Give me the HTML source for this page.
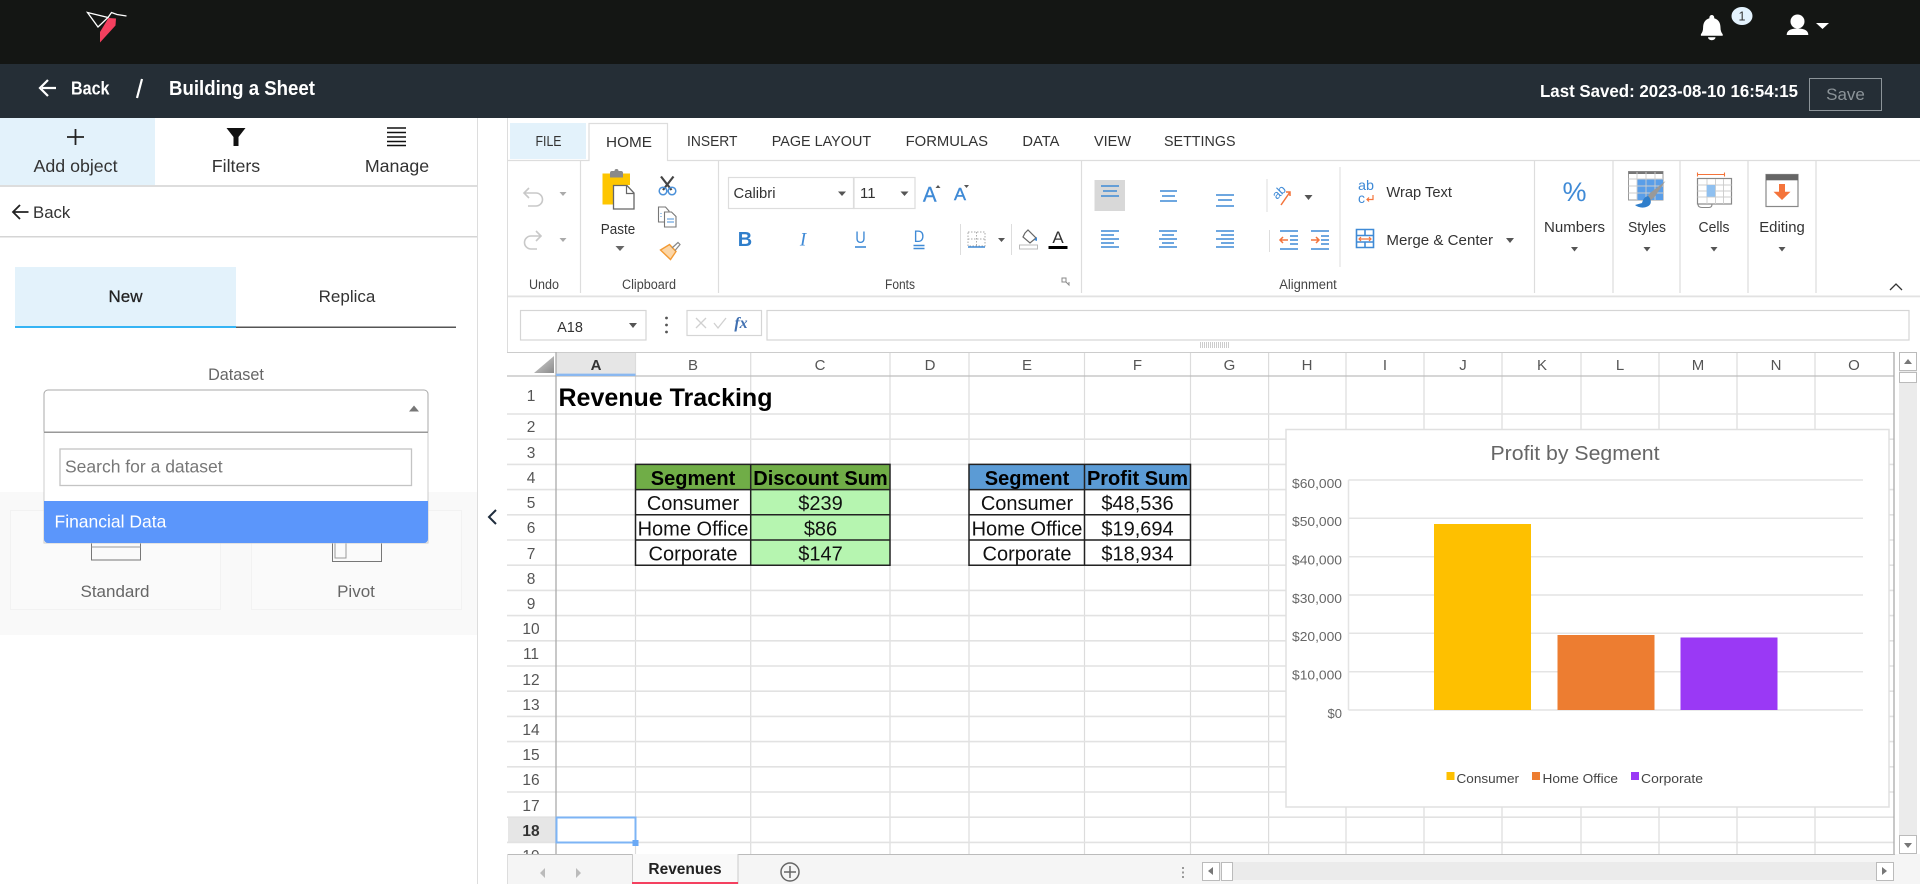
<!DOCTYPE html>
<html lang="en">
<head>
<meta charset="utf-8">
<title>Building a Sheet</title>
<style>
html,body{margin:0;padding:0;width:1920px;height:884px;overflow:hidden;background:#fff;font-family:"Liberation Sans",sans-serif}
svg{position:absolute;left:0;top:0}
text{font-family:"Liberation Sans",sans-serif}
.rb{font-size:14.5px;fill:#333}
.tab{font-size:14.8px;fill:#333}
.lbl{font-size:13.5px;fill:#444;text-anchor:middle}
.rn{font-size:15.5px;fill:#555;text-anchor:middle}
.cl{font-size:15px;fill:#555;text-anchor:middle}
.th{font-size:20px;font-weight:bold;fill:#000;text-anchor:middle}
.td{font-size:20px;fill:#111;text-anchor:middle}
.ax{font-size:13px;fill:#666;text-anchor:end}
.lg{font-size:12.5px;fill:#444}
.b{stroke:#3f8ad6;stroke-width:1.6;fill:none}
</style>
</head>
<body>
<svg width="1920" height="884" viewBox="0 0 1920 884">
<defs>
<linearGradient id="cor" x1="0" y1="0" x2="1" y2="1"><stop offset="0" stop-color="#d8d8d8"/><stop offset="1" stop-color="#8a8a8a"/></linearGradient>
<clipPath id="gridclip"><rect x="507" y="352" width="1388" height="502"/></clipPath>
</defs>

<!-- top bars -->
<rect x="0" y="0" width="1920" height="64" fill="#141614"/>
<rect x="0" y="64" width="1920" height="54" fill="#252e36"/>
<!-- logo -->
<path d="M87.500 12.500L108 17.500L98 27Z" fill="none" stroke="#fff" stroke-width="1.300"/>
<path d="M108 17.500L111.500 12.500L117 14.500L126.500 16" fill="none" stroke="#fff" stroke-width="1.300"/>
<path d="M108.500 18L116 18.500L115.500 25.500L100 42.500L100 32Z" fill="#f4405f"/>
<!-- bell / user -->
<path d="M1711.800 15a2.400 2.400 0 0 1 2.400 2.400v.8c4.500 1.200 6.300 5 6.300 9.300 0 3 .8 5 2.200 6.700v1.500h-21.800v-1.500c1.400-1.700 2.200-3.700 2.200-6.700 0-4.300 1.800-8.100 6.300-9.300v-.8a2.400 2.400 0 0 1 2.400-2.400z M1708 37.300h7.500a3.750 3 0 0 1-7.500 0z" fill="#fff"/>
<ellipse cx="1742" cy="16" rx="10.500" ry="9" fill="#e3f2fd"/>
<text x="1742" y="20.500" font-size="12.500" fill="#333" text-anchor="middle">1</text>
<circle cx="1797.500" cy="21.500" r="7" fill="#fff"/>
<path d="M1786.700 35c0-5 5-6.500 10.800-6.500s10.800 1.500 10.800 6.500z" fill="#fff"/>
<path d="M1816 23h13l-6.500 6z" fill="#fff"/>
<!-- sub header -->
<path d="M56 88H42M48 80l-8 8 8 8" fill="none" stroke="#fff" stroke-width="2.200"/>
<text x="71" y="94.500" font-size="18" font-weight="bold" fill="#fff" textLength="38.500" lengthAdjust="spacingAndGlyphs">Back</text>
<path d="M142 79L137 98" stroke="#fff" stroke-width="2.200"/>
<text x="169" y="95" font-size="20" font-weight="bold" fill="#fff" textLength="146" lengthAdjust="spacingAndGlyphs">Building a Sheet</text>
<text x="1540" y="97" font-size="17.500" font-weight="bold" fill="#fff" textLength="258" lengthAdjust="spacingAndGlyphs">Last Saved: 2023-08-10 16:54:15</text>
<rect x="1809.500" y="78.500" width="72" height="32" fill="none" stroke="#8c9499"/>
<text x="1845.500" y="100" font-size="17" fill="#8c9499" text-anchor="middle">Save</text>

<!-- left panel -->
<rect x="0" y="118" width="155" height="67" fill="#e3f2fb"/>
<path d="M75.500 129v16M67 137h17" stroke="#222" stroke-width="1.800"/>
<path d="M226.500 128h19l-7 9v9h-5v-9z" fill="#111"/>
<path d="M387 128h19M387 132.500h19M387 137h19M387 141.500h19M387 145.500h19" stroke="#111" stroke-width="1.500"/>
<text x="75.500" y="172" font-size="17.800" fill="#333" text-anchor="middle">Add object</text>
<text x="236" y="172" font-size="17.800" fill="#333" text-anchor="middle">Filters</text>
<text x="397" y="172" font-size="17.800" fill="#333" text-anchor="middle">Manage</text>
<rect x="0" y="185" width="477" height="2" fill="#ddd"/>
<path d="M28.500 212H13M20 205l-7 7 7 7" fill="none" stroke="#222" stroke-width="1.800"/>
<text x="33" y="218" font-size="16.800" fill="#333">Back</text>
<rect x="0" y="236" width="477" height="1.500" fill="#d5d5d5"/>
<rect x="15" y="267" width="221" height="60" fill="#e3f2fb"/>
<text x="125.500" y="302" font-size="17" fill="#222" text-anchor="middle" stroke="#222" stroke-width=".25">New</text>
<text x="347" y="302" font-size="17" fill="#333" text-anchor="middle">Replica</text>
<rect x="15" y="326" width="221" height="2" fill="#35b4f4"/>
<rect x="236" y="326.500" width="220" height="1.500" fill="#555"/>
<text x="236" y="380" font-size="16.200" fill="#666" text-anchor="middle">Dataset</text>

<rect x="0" y="492" width="477" height="143" fill="#f9f9f9"/>
<rect x="10.500" y="510.500" width="210" height="99" fill="#fafafa" stroke="#f2f2f2"/>
<rect x="251.500" y="510.500" width="210" height="99" fill="#fafafa" stroke="#f2f2f2"/>
<rect x="91.500" y="530" width="49" height="30" fill="none" stroke="#777"/>
<path d="M91.500 547h49" stroke="#999"/>
<rect x="332.500" y="530" width="49" height="31.500" fill="none" stroke="#777"/>
<rect x="335" y="530" width="11" height="28" fill="none" stroke="#999"/>
<text x="115" y="597" font-size="17" fill="#666" text-anchor="middle">Standard</text>
<text x="356" y="597" font-size="17" fill="#666" text-anchor="middle">Pivot</text>

<!-- dropdown -->
<path d="M44 432V394a4 4 0 0 1 4-4H424a4 4 0 0 1 4 4V432Z" fill="#fff" stroke="#aaa"/>
<path d="M409 411.500h10l-5-6z" fill="#777"/>
<rect x="44" y="432" width="384" height="111" fill="#fff" stroke="#ccc"/>
<rect x="44" y="431.500" width="384" height="1.500" fill="#999"/>
<rect x="60" y="449" width="351.500" height="36.500" fill="#fff" stroke="#c4c4c4" stroke-width="1.300"/>
<text x="65" y="472.500" font-size="17.500" fill="#777">Search for a dataset</text>
<path d="M44 501H428V539a4 4 0 0 1-4 4H48a4 4 0 0 1-4-4Z" fill="#5b96fb"/>
<text x="54.500" y="527.500" font-size="17.500" fill="#fff">Financial Data</text>
<path d="M496 510l-7 7 7 7" fill="none" stroke="#1f2d3d" stroke-width="2"/>

<rect x="477" y="118" width="1" height="766" fill="#ddd"/>
<rect x="507" y="118" width="1" height="766" fill="#ddd"/>

<!-- ribbon tabs -->
<rect x="510" y="123" width="76" height="36" fill="#e3f2fb"/>
<path d="M508 160.500H589V123.500H667.500V160.500H1920" fill="none" stroke="#ddd" stroke-width="1.200"/>
<text class="tab" x="548.500" y="146" text-anchor="middle" textLength="26" lengthAdjust="spacingAndGlyphs">FILE</text>
<text class="tab" x="629" y="147" text-anchor="middle" textLength="46" lengthAdjust="spacingAndGlyphs">HOME</text>
<text class="tab" x="687" y="146" textLength="50.500" lengthAdjust="spacingAndGlyphs">INSERT</text>
<text class="tab" x="771.700" y="146" textLength="99.500" lengthAdjust="spacingAndGlyphs">PAGE LAYOUT</text>
<text class="tab" x="905.600" y="146" textLength="82.500" lengthAdjust="spacingAndGlyphs">FORMULAS</text>
<text class="tab" x="1022.400" y="146" textLength="37" lengthAdjust="spacingAndGlyphs">DATA</text>
<text class="tab" x="1094" y="146" textLength="37" lengthAdjust="spacingAndGlyphs">VIEW</text>
<text class="tab" x="1164" y="146" textLength="71.500" lengthAdjust="spacingAndGlyphs">SETTINGS</text>

<!-- ribbon separators -->
<path d="M580.500 161V293M718.500 161V293M1081.500 161V293M1534.500 161V293M1613 161V293M1680 161V293M1748 161V293M1816 161V293" stroke="#ddd" stroke-width="1.200"/>
<rect x="508" y="295.500" width="1412" height="1.800" fill="#e2e2e2"/>
<text class="lbl" x="544" y="289" textLength="30" lengthAdjust="spacingAndGlyphs">Undo</text>
<text class="lbl" x="649" y="289" textLength="54" lengthAdjust="spacingAndGlyphs">Clipboard</text>
<text class="lbl" x="900" y="289" textLength="30" lengthAdjust="spacingAndGlyphs">Fonts</text>
<text class="lbl" x="1308" y="289" textLength="57.600" lengthAdjust="spacingAndGlyphs">Alignment</text>

<!-- undo/redo -->
<path d="M524 193h12a6.500 6.500 0 0 1 0 13h-8M529 188l-5 5 5 5" fill="none" stroke="#c8c8c8" stroke-width="1.600"/>
<path d="M541 236h-10a6.500 6.500 0 0 0 0 13h6M536 231l5 5-5 5" fill="none" stroke="#c8c8c8" stroke-width="1.600"/>
<path d="M559.500 192h7l-3.500 4zM559.500 238h7l-3.500 4z" fill="#aaa"/>

<!-- clipboard -->
<path d="M602.500 173.500H630V185H613.500V204.500H602.500Z" fill="#fec600"/>
<path d="M610 177.500v-4.500a2 2 0 0 1 2-2h2.500a2 2 0 0 1 4 0h2.500a2 2 0 0 1 2 2v4.500z" fill="#8a8a8a"/>
<path d="M613.500 185.500h13.500l7 7.500v16h-20.500z" fill="#fff" stroke="#666" stroke-width="1.300"/>
<path d="M626.500 185.500v8h7.500" fill="none" stroke="#666" stroke-width="1.200"/>
<text class="rb" x="618" y="234" text-anchor="middle" textLength="34.400" lengthAdjust="spacingAndGlyphs">Paste</text>
<path d="M615.500 246h9l-4.500 5z" fill="#666"/>
<path d="M661 176.500L671.500 190M673.500 176.500L663 190" stroke="#444" stroke-width="2.200"/>
<circle cx="663" cy="191" r="3.800" fill="none" stroke="#4a90d9" stroke-width="1.500"/>
<circle cx="672" cy="191" r="3.800" fill="none" stroke="#4a90d9" stroke-width="1.500"/>
<path d="M658.500 207h7l3.500 4v11h-10.500z" fill="#fff" stroke="#777" stroke-width="1.100"/>
<path d="M664.500 212h7l4.500 4.500v10.500h-11.500z" fill="#fff" stroke="#777" stroke-width="1.100"/>
<path d="M667 219h7M667 222h7M661 213v1M661 216v1" stroke="#4a90d9"/>
<path d="M660.500 250l9-5.500 6.500 7-5.500 8z" fill="#fcd6a6" stroke="#f39a33" stroke-width="1.400"/>
<path d="M672 248l6-5.500 2 2-5 6" fill="none" stroke="#888" stroke-width="1.200"/>

<!-- fonts -->
<rect x="728.500" y="177.500" width="125" height="31" fill="#fff" stroke="#ddd" stroke-width="1.200"/>
<rect x="854" y="177.500" width="61" height="31" fill="#fff" stroke="#ddd" stroke-width="1.200"/>
<text x="733.500" y="198" font-size="15" fill="#333" textLength="42" lengthAdjust="spacingAndGlyphs">Calibri</text>
<text x="860" y="198" font-size="15" fill="#333">11</text>
<path d="M838 191.500h8l-4 4.500zM900.500 191.500h8l-4 4.500z" fill="#555"/>
<text x="923" y="201.700" font-size="21.500" fill="#3f8ad6" textLength="13.500" lengthAdjust="spacingAndGlyphs" stroke="#3f8ad6" stroke-width=".4">A</text>
<path d="M935.500 188l2.500-3 2.500 3z" fill="#555"/>
<text x="954" y="200" font-size="17.500" fill="#3f8ad6" textLength="12" lengthAdjust="spacingAndGlyphs" stroke="#3f8ad6" stroke-width=".4">A</text>
<path d="M964 185h5l-2.500 3z" fill="#555"/>
<text x="745" y="246" font-size="20" font-weight="bold" fill="#2f7ecb" text-anchor="middle">B</text>
<text x="803" y="245.500" font-size="19" font-style="italic" fill="#3f8ad6" text-anchor="middle" style="font-family:'Liberation Serif',serif">I</text>
<text x="860.500" y="243" font-size="16.500" fill="#3f8ad6" text-anchor="middle" textLength="10.500" lengthAdjust="spacingAndGlyphs">U</text>
<path d="M855 247h11" class="b"/>
<text x="919" y="242" font-size="16.500" fill="#3f8ad6" text-anchor="middle" textLength="10.500" lengthAdjust="spacingAndGlyphs">D</text>
<path d="M913.500 245.500h11M913.500 248.500h11" class="b"/>
<path d="M960.500 224v31M1011.500 224v31" stroke="#ddd"/>
<path d="M968 232h17v14h-17zM976.500 232v14M968 239h17" fill="none" stroke="#aaa" stroke-dasharray="1.500 1.500"/>
<path d="M968 247h17" class="b"/>
<path d="M998 238h7l-3.500 4z" fill="#555"/>
<path d="M1025 233l3-3 8 8-6 5-7-6z" fill="none" stroke="#666" stroke-width="1.200"/>
<path d="M1034 240l3-3v4z" fill="#3f8ad6"/>
<rect x="1019.500" y="245" width="18" height="4" fill="#fff" stroke="#bbb"/>
<text x="1058" y="243" font-size="17" fill="#333" text-anchor="middle">A</text>
<rect x="1048.500" y="246" width="19" height="3" fill="#000"/>
<path d="M1062 278h4v4h-4zM1066 282l3 3v-3" fill="none" stroke="#888"/>

<!-- alignment -->
<rect x="1094.500" y="180" width="30.500" height="31" fill="#d8d8d8"/>
<path class="b" d="M1101 186h18M1103 191h14M1101 196h18"/>
<path class="b" d="M1160 191h17M1162 196h13M1160 201h17"/>
<path class="b" d="M1216 195h18M1218 200h14M1216 206h18"/>
<path class="b" d="M1101 231h18M1101 235h13M1101 239h18M1101 243h13M1101 247h18"/>
<path class="b" d="M1159 231h18M1162 235h12M1159 239h18M1162 243h12M1159 247h18"/>
<path class="b" d="M1216 231h18M1221 235h13M1216 239h18M1221 243h13M1216 247h18"/>
<path d="M1267 179v33M1269.500 230v22M1340 167v100" stroke="#ddd"/>
<text x="1277" y="200" font-size="12.500" fill="#3f8ad6" transform="rotate(-45 1277 200)">ab</text>
<path d="M1281 205l9-13M1286 192h4v4" fill="none" stroke="#f4743b" stroke-width="1.500"/>
<path d="M1304.500 195h8l-4 5z" fill="#555"/>
<path class="b" d="M1280 231h18M1290 236h8M1290 240h8M1290 244h8M1280 249h18"/>
<path d="M1288 240h-8M1283 237l-3 3 3 3" fill="none" stroke="#f4743b" stroke-width="1.500"/>
<path class="b" d="M1311 231h18M1321 236h8M1321 240h8M1321 244h8M1311 249h18"/>
<path d="M1311 240h8M1316 237l3 3-3 3" fill="none" stroke="#f4743b" stroke-width="1.500"/>
<text x="1358" y="190" font-size="14" fill="#3f8ad6" textLength="16" lengthAdjust="spacingAndGlyphs">ab</text>
<text x="1358" y="203" font-size="14" fill="#3f8ad6">c</text>
<path d="M1373 195v4.500h-6M1369 197.500l-2 2 2 2" fill="none" stroke="#f4743b" stroke-width="1.200"/>
<text class="rb" x="1386.400" y="197" textLength="65.600" lengthAdjust="spacingAndGlyphs">Wrap Text</text>
<path d="M1356.500 229.500h17v18h-17zM1356.500 235.500h17M1356.500 242h17M1365 229.500v6M1365 242v6" class="b"/>
<path d="M1359 239h12M1361 237l-2 2 2 2M1369 237l2 2-2 2" fill="none" stroke="#f4743b" stroke-width="1.200"/>
<text class="rb" x="1386.400" y="245" textLength="106.600" lengthAdjust="spacingAndGlyphs">Merge &amp; Center</text>
<path d="M1506 238h8l-4 5z" fill="#555"/>

<!-- numbers / styles / cells / editing -->
<text x="1574.500" y="201" font-size="27" fill="#3f8ad6" text-anchor="middle">%</text>
<text class="rb" x="1574.500" y="232" text-anchor="middle" textLength="61" lengthAdjust="spacingAndGlyphs">Numbers</text>
<path d="M1571 247h7l-3.500 4.500z" fill="#555"/>

<rect x="1628.500" y="171.500" width="34.500" height="28.500" fill="#fff" stroke="#999"/>
<rect x="1628.500" y="171.500" width="34.500" height="2.500" fill="#777"/>
<rect x="1637" y="179" width="26" height="21" fill="#5a9ee8"/>
<path d="M1628.500 179h34.500M1628.500 186h34.500M1628.500 193h34.500M1637 172v28M1646 172v28M1655 172v28" stroke="#ccc" stroke-width=".9"/>
<path d="M1665.500 181L1650 193l-3.500 5 4 2.500 4-3.500z" fill="#999"/>
<path d="M1648 196c-4 1-5 4-6 7l-7 2c4 3.500 12 3.500 15-.5 2-3 0-7-2-8.500z" fill="#2f7ecb"/>
<text class="rb" x="1647" y="232" text-anchor="middle" textLength="38" lengthAdjust="spacingAndGlyphs">Styles</text>
<path d="M1643.500 247h7l-3.500 4.500z" fill="#555"/>

<path d="M1698 174.500h26M1697.500 172.500v4M1724.500 172.500v4" stroke="#f4743b" fill="none" stroke-width="1.100"/>
<rect x="1697.500" y="178.500" width="34" height="25.500" fill="#fff" stroke="#888" stroke-width="1.200"/>
<path d="M1707 179v25M1715.500 179v25M1723.500 179v25M1697.500 185h34M1697.500 191h34M1697.500 197h34" stroke="#ccc" stroke-width=".9"/>
<rect x="1706.700" y="185" width="8.500" height="11.700" fill="#8fc0f0"/>
<path d="M1698 204c0 3 2 3.500 4 3.500h7c2 0 3-1 3-3.500" fill="none" stroke="#888" stroke-width="1.100"/>
<text class="rb" x="1714" y="232" text-anchor="middle" textLength="31" lengthAdjust="spacingAndGlyphs">Cells</text>
<path d="M1710.500 247h7l-3.500 4.500z" fill="#555"/>

<rect x="1766" y="174.500" width="32" height="32" fill="#fff" stroke="#888" stroke-width="1.200"/>
<rect x="1766" y="174.500" width="32" height="5.800" fill="#666"/>
<path d="M1779 184h6v7.700h5.500l-8.500 8.300-8.500-8.300h5.500z" fill="#f4743b"/>
<text class="rb" x="1782" y="232" text-anchor="middle" textLength="45.500" lengthAdjust="spacingAndGlyphs">Editing</text>
<path d="M1778.500 247h7l-3.500 4.500z" fill="#555"/>
<path d="M1890 290l6-6 6 6" fill="none" stroke="#333" stroke-width="1.300"/>

<!-- formula bar -->
<rect x="520.500" y="310.500" width="125.500" height="29.500" fill="#fff" stroke="#d5d5d5" stroke-width="1.200"/>
<text x="570" y="332" font-size="14.500" fill="#333" text-anchor="middle">A18</text>
<path d="M629 323h8l-4 5z" fill="#555"/>
<circle cx="666.500" cy="318" r="1.400" fill="#555"/><circle cx="666.500" cy="325" r="1.400" fill="#555"/><circle cx="666.500" cy="332" r="1.400" fill="#555"/>
<rect x="687" y="310.500" width="74.500" height="25" fill="#fff" stroke="#d5d5d5" stroke-width="1.200"/>
<path d="M696 318l10 10M706 318l-10 10M714 323l4 5 8-10" fill="none" stroke="#d0d0d0" stroke-width="1.300"/>
<text x="741" y="328" font-size="16" font-style="italic" font-weight="bold" fill="#3f6fb0" text-anchor="middle" style="font-family:'Liberation Serif',serif">fx</text>
<rect x="767" y="310.500" width="1142" height="29.500" fill="#fff" stroke="#d5d5d5" stroke-width="1.200"/>
<path d="M1200 343h30M1200 345h30M1200 347h30" stroke="#999" stroke-dasharray="1 1"/>

<!-- grid -->
<g clip-path="url(#gridclip)">
<rect x="507" y="352" width="1388" height="502" fill="#fff"/>
<rect x="556" y="352" width="80" height="24" fill="#e6e6e6"/>
<rect x="508" y="817" width="48" height="25.400" fill="#e6e6e6"/>
<path d="M554 356v17h-20z" fill="url(#cor)"/>
<path stroke="#dcdcdc" stroke-width="1.200" fill="none" d="M635.500 352V854M750.700 352V854M890 352V854M969 352V854M1084.500 352V854M1190.500 352V854M1268.600 352V854M1346 352V854M1424 352V854M1502 352V854M1581 352V854M1659 352V854M1737 352V854M1815 352V854"/>
<path stroke="#e2e2e2" stroke-width="1.600" fill="none" d="M507 414H1894M507 439.200H1894M507 464.400H1894M507 489.600H1894M507 514.800H1894M507 540H1894M507 565.200H1894M507 590.400H1894M507 615.600H1894M507 640.800H1894M507 666H1894M507 691.200H1894M507 716.400H1894M507 741.600H1894M507 766.800H1894M507 792H1894M507 817.200H1894M507 842.400H1894"/>
<path d="M507 352.500H1894" stroke="#ccc"/>
<path d="M507 376H1894" stroke="#bdbdbd" stroke-width="1.300"/>
<path d="M556 352V854" stroke="#aaa" stroke-width="1.300"/>
<path d="M556 374.800H635.500" stroke="#8ab8f0" stroke-width="2.400"/>
<g>
<text class="cl" x="596" y="370" font-weight="bold" style="fill:#333">A</text>
<text class="cl" x="693" y="370">B</text><text class="cl" x="820" y="370">C</text><text class="cl" x="930" y="370">D</text><text class="cl" x="1027" y="370">E</text><text class="cl" x="1137.500" y="370">F</text><text class="cl" x="1229.500" y="370">G</text><text class="cl" x="1307" y="370">H</text><text class="cl" x="1385" y="370">I</text><text class="cl" x="1463" y="370">J</text><text class="cl" x="1542" y="370">K</text><text class="cl" x="1620" y="370">L</text><text class="cl" x="1698" y="370">M</text><text class="cl" x="1776" y="370">N</text><text class="cl" x="1854" y="370">O</text>
</g>
<text class="rn" x="531" y="401">1</text><text class="rn" x="531" y="432">2</text><text class="rn" x="531" y="458">3</text><text class="rn" x="531" y="483">4</text><text class="rn" x="531" y="508">5</text><text class="rn" x="531" y="533">6</text><text class="rn" x="531" y="559">7</text><text class="rn" x="531" y="584">8</text><text class="rn" x="531" y="609">9</text><text class="rn" x="531" y="634">10</text><text class="rn" x="531" y="659">11</text><text class="rn" x="531" y="685">12</text><text class="rn" x="531" y="710">13</text><text class="rn" x="531" y="735">14</text><text class="rn" x="531" y="760">15</text><text class="rn" x="531" y="785">16</text><text class="rn" x="531" y="811">17</text><text class="rn" x="531" y="836" font-weight="bold" style="fill:#333">18</text><text class="rn" x="531" y="861">19</text>

<text x="558.500" y="406" font-size="25" font-weight="bold" fill="#000">Revenue Tracking</text>

<!-- table 1 -->
<rect x="635.500" y="464.400" width="254.500" height="25.200" fill="#70ad47"/>
<rect x="750.700" y="489.600" width="139.300" height="75.600" fill="#b6f5b0"/>
<path d="M635.500 464.400H890V565.200H635.500ZM750.700 464.400V565.200M635.500 489.600H890M635.500 514.800H890M635.500 540H890" fill="none" stroke="#222" stroke-width="1.500"/>
<text class="th" x="693" y="485">Segment</text><text class="th" x="820.500" y="485">Discount Sum</text>
<text class="td" x="693" y="510">Consumer</text><text class="td" x="820.500" y="510">$239</text>
<text class="td" x="693" y="535.500">Home Office</text><text class="td" x="820.500" y="535.500">$86</text>
<text class="td" x="693" y="560.500">Corporate</text><text class="td" x="820.500" y="560.500">$147</text>
<!-- table 2 -->
<rect x="969" y="464.400" width="221.500" height="25.200" fill="#5b9bd5"/>
<path d="M969 464.400H1190.500V565.200H969ZM1084.500 464.400V565.200M969 489.600H1190.500M969 514.800H1190.500M969 540H1190.500" fill="none" stroke="#222" stroke-width="1.500"/>
<text class="th" x="1027" y="485">Segment</text><text class="th" x="1137.500" y="485">Profit Sum</text>
<text class="td" x="1027" y="510">Consumer</text><text class="td" x="1137.500" y="510">$48,536</text>
<text class="td" x="1027" y="535.500">Home Office</text><text class="td" x="1137.500" y="535.500">$19,694</text>
<text class="td" x="1027" y="560.500">Corporate</text><text class="td" x="1137.500" y="560.500">$18,934</text>

<!-- selection -->
<rect x="556.500" y="817.500" width="79" height="25" fill="none" stroke="#7db4f5" stroke-width="2"/>
<rect x="632.500" y="840" width="6" height="6" fill="#6aa9f5"/>

<!-- chart -->
<rect x="1286" y="429.500" width="603" height="377.500" fill="#fff" stroke="#e0e0e0" stroke-width="1.500"/>
<text x="1575" y="460" font-size="20" fill="#666" text-anchor="middle" textLength="169" lengthAdjust="spacingAndGlyphs">Profit by Segment</text>
<path d="M1348.500 480H1863M1348.500 518.300H1863M1348.500 556.700H1863M1348.500 595H1863M1348.500 633.300H1863M1348.500 671.700H1863M1348.500 710H1863M1348.500 480V710" fill="none" stroke="#e4e4e4" stroke-width="1.500"/>
<rect x="1434" y="524" width="97" height="186" fill="#fec000"/>
<rect x="1557.500" y="635" width="97" height="75" fill="#ed7d31"/>
<rect x="1680.500" y="637.500" width="97" height="72.500" fill="#9a39f5"/>
<text class="ax" x="1342" y="488" textLength="50" lengthAdjust="spacingAndGlyphs">$60,000</text>
<text class="ax" x="1342" y="526" textLength="50" lengthAdjust="spacingAndGlyphs">$50,000</text>
<text class="ax" x="1342" y="564.500" textLength="50" lengthAdjust="spacingAndGlyphs">$40,000</text>
<text class="ax" x="1342" y="603" textLength="50" lengthAdjust="spacingAndGlyphs">$30,000</text>
<text class="ax" x="1342" y="641" textLength="50" lengthAdjust="spacingAndGlyphs">$20,000</text>
<text class="ax" x="1342" y="679.500" textLength="50" lengthAdjust="spacingAndGlyphs">$10,000</text>
<text class="ax" x="1342" y="718">$0</text>
<rect x="1446.500" y="772" width="8" height="8" fill="#fec000"/>
<text class="lg" x="1456.500" y="783" textLength="62.500" lengthAdjust="spacingAndGlyphs">Consumer</text>
<rect x="1532" y="772" width="8" height="8" fill="#ed7d31"/>
<text class="lg" x="1542.500" y="783" textLength="75.500" lengthAdjust="spacingAndGlyphs">Home Office</text>
<rect x="1631" y="772" width="8" height="8" fill="#9a39f5"/>
<text class="lg" x="1641" y="783" textLength="62" lengthAdjust="spacingAndGlyphs">Corporate</text>
</g>
<path d="M1894 352V854" stroke="#aaa" stroke-width="1.300"/>

<!-- vertical scrollbar -->
<rect x="1899" y="352" width="18" height="502" fill="#ebebeb"/>
<rect x="1899.500" y="352.500" width="17" height="18" fill="#fff" stroke="#bbb"/>
<path d="M1904 364h8l-4-5z" fill="#777"/>
<rect x="1899.500" y="372.500" width="17" height="10" fill="#fff" stroke="#bbb"/>
<rect x="1899.500" y="835.500" width="17" height="18" fill="#fff" stroke="#bbb"/>
<path d="M1904 843h8l-4 5z" fill="#777"/>

<!-- sheet bar -->
<rect x="508" y="854" width="1412" height="30" fill="#f5f5f5"/>
<path d="M508 854.500H1895" stroke="#bbb"/>
<rect x="632" y="854" width="106" height="30" fill="#f9f9f9"/>
<path d="M632.500 884V854M738 884V854" stroke="#ccc"/>
<rect x="632" y="882" width="106" height="2" fill="#f4405f"/>
<text x="685" y="874" font-size="15.500" font-weight="bold" fill="#222" text-anchor="middle">Revenues</text>
<path d="M545 868l-5 5 5 5zM576 868l5 5-5 5z" fill="#bbb"/>
<circle cx="790" cy="872" r="9" fill="none" stroke="#666" stroke-width="1.500"/>
<path d="M790 866v12M784 872h12" stroke="#666" stroke-width="1.500"/>
<path d="M1183 867v2M1183 871.500v2M1183 876v2" stroke="#999" stroke-width="2"/>
<rect x="1202" y="862" width="691" height="18" fill="#ebebeb"/>
<rect x="1202.500" y="862.500" width="17" height="18" fill="#fff" stroke="#bbb"/>
<path d="M1213 867v8l-5-4z" fill="#777"/>
<rect x="1221.500" y="862.500" width="11" height="18" fill="#fff" stroke="#bbb"/>
<rect x="1876.500" y="862.500" width="17" height="18" fill="#fff" stroke="#bbb"/>
<path d="M1882 867v8l5-4z" fill="#777"/>
</svg>
</body>
</html>
